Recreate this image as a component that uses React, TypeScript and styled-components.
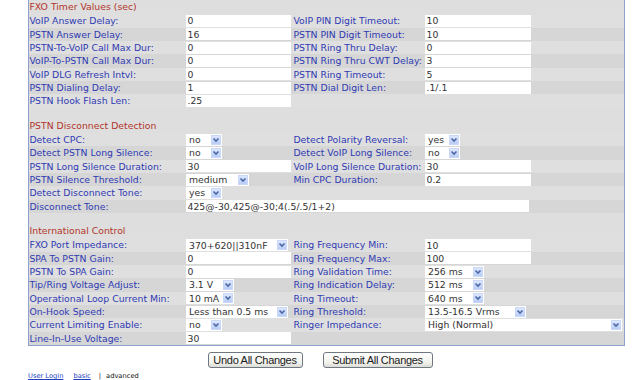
import React from "react";
import styled, { createGlobalStyle } from "styled-components";

const GlobalStyle = createGlobalStyle`
  html, body {
    margin: 0;
    padding: 0;
    background: #ffffff;
  }
  body {
    font-family: "DejaVu Sans", Verdana, sans-serif;
    overflow: hidden;
  }
`;

const Page = styled.div`
  width: 640px;
  height: 380px;
`;

const Panel = styled.div`
  margin-left: 28px;
  width: 595px;
  border-left: 1px solid #8f9fce;
  border-right: 1px solid #8f9fce;
  border-bottom: 1px solid #8f9fce;
`;

const SectionTitle = styled.div`
  height: 14.3px;
  padding-left: 0.5px;
  background: #dedede;
  color: #b3342b;
  font-size: 9.3px;
  line-height: 13.33px;
  white-space: nowrap;
`;

const Spacer = styled.div`
  height: 11.1px;
  background: #dedede;
`;

const Row = styled.div<{ $shade: boolean }>`
  display: grid;
  grid-template-columns: 157px 107px 132px 199px;
  height: 13.33px;
  align-items: center;
  background: ${(p) => (p.$shade ? "#d6d6d6" : "#dfdfdf")};
`;

const Label = styled.span`
  padding-left: 0.4px;
  color: #2f3ab3;
  font-size: 9.3px;
  line-height: 13.33px;
  white-space: nowrap;
  overflow: hidden;
`;

const Field = styled.input<{ $w: number }>`
  display: block;
  width: ${(p) => p.$w}px;
  height: 12px;
  box-sizing: border-box;
  margin: 0;
  padding: 0 0 0 1.5px;
  border: 0;
  outline: none;
  background: #ffffff;
  color: #333333;
  font-family: "DejaVu Sans", Verdana, sans-serif;
  font-size: 9.3px;
`;

const WideCell = styled.div`
  grid-column: 2 / span 3;
`;

const SelectBox = styled.div<{ $w: number }>`
  display: flex;
  align-items: center;
  justify-content: space-between;
  width: ${(p) => p.$w}px;
  height: 12px;
  box-sizing: border-box;
  padding: 0 1px 0 3px;
  background: #ffffff;
  color: #333333;
  font-size: 9.3px;
  white-space: nowrap;
`;

const ArrowBtn = styled.span`
  display: flex;
  align-items: center;
  justify-content: center;
  width: 10px;
  height: 10px;
  box-sizing: border-box;
  border: 1px solid #c9d8f8;
  background: linear-gradient(#dde7fd, #bacdf6);
`;

const ButtonBar = styled.div`
  display: flex;
  justify-content: center;
  gap: 20px;
  margin-top: 6px;
`;

const Button = styled.button<{ $w: number }>`
  width: ${(p) => p.$w}px;
  height: 16px;
  margin: 0;
  padding: 0;
  border: 1px solid #6f7780;
  border-radius: 3px;
  background: linear-gradient(#ffffff, #f1f1ec 70%, #dcdcd6);
  color: #1a1a1a;
  font-family: "Liberation Sans", Arial, sans-serif;
  font-size: 11px;
  letter-spacing: -0.3px;
  line-height: 14px;
`;

const Footer = styled.div`
  display: flex;
  align-items: baseline;
  margin-top: 4px;
  padding-left: 28px;
  font-size: 6.7px;
  line-height: 8px;
  color: #111111;
`;

const FootLink = styled.a<{ $gap?: number }>`
  margin-left: ${(p) => p.$gap ?? 0}px;
  color: #1d3fbf;
  text-decoration: underline;
`;

const FootText = styled.span<{ $gap?: number }>`
  margin-left: ${(p) => p.$gap ?? 0}px;
`;

type Cell =
  | { kind: "input"; value: string }
  | { kind: "select"; value: string; w: number };

type RowSpec = {
  label: string;
  cell: Cell;
  label2?: string;
  cell2?: Cell;
  wide?: boolean;
};

type Section = { title: string; rows: RowSpec[] };

const inp = (value: string): Cell => ({ kind: "input", value });
const sel = (value: string, w: number): Cell => ({ kind: "select", value, w });

const sections: Section[] = [
  {
    title: "FXO Timer Values (sec)",
    rows: [
      { label: "VoIP Answer Delay:", cell: inp("0"), label2: "VoIP PIN Digit Timeout:", cell2: inp("10") },
      { label: "PSTN Answer Delay:", cell: inp("16"), label2: "PSTN PIN Digit Timeout:", cell2: inp("10") },
      { label: "PSTN-To-VoIP Call Max Dur:", cell: inp("0"), label2: "PSTN Ring Thru Delay:", cell2: inp("0") },
      { label: "VoIP-To-PSTN Call Max Dur:", cell: inp("0"), label2: "PSTN Ring Thru CWT Delay:", cell2: inp("3") },
      { label: "VoIP DLG Refresh Intvl:", cell: inp("0"), label2: "PSTN Ring Timeout:", cell2: inp("5") },
      { label: "PSTN Dialing Delay:", cell: inp("1"), label2: "PSTN Dial Digit Len:", cell2: inp(".1/.1") },
      { label: "PSTN Hook Flash Len:", cell: inp(".25") },
    ],
  },
  {
    title: "PSTN Disconnect Detection",
    rows: [
      { label: "Detect CPC:", cell: sel("no", 36), label2: "Detect Polarity Reversal:", cell2: sel("yes", 35) },
      { label: "Detect PSTN Long Silence:", cell: sel("no", 36), label2: "Detect VoIP Long Silence:", cell2: sel("no", 35) },
      { label: "PSTN Long Silence Duration:", cell: inp("30"), label2: "VoIP Long Silence Duration:", cell2: inp("30") },
      { label: "PSTN Silence Threshold:", cell: sel("medium", 63), label2: "Min CPC Duration:", cell2: inp("0.2") },
      { label: "Detect Disconnect Tone:", cell: sel("yes", 36) },
      { label: "Disconnect Tone:", cell: inp("425@-30,425@-30;4(.5/.5/1+2)"), wide: true },
    ],
  },
  {
    title: "International Control",
    rows: [
      { label: "FXO Port Impedance:", cell: sel("370+620||310nF", 102), label2: "Ring Frequency Min:", cell2: inp("10") },
      { label: "SPA To PSTN Gain:", cell: inp("0"), label2: "Ring Frequency Max:", cell2: inp("100") },
      { label: "PSTN To SPA Gain:", cell: inp("0"), label2: "Ring Validation Time:", cell2: sel("256 ms", 59) },
      { label: "Tip/Ring Voltage Adjust:", cell: sel("3.1 V", 48), label2: "Ring Indication Delay:", cell2: sel("512 ms", 59) },
      { label: "Operational Loop Current Min:", cell: sel("10 mA", 48), label2: "Ring Timeout:", cell2: sel("640 ms", 59) },
      { label: "On-Hook Speed:", cell: sel("Less than 0.5 ms", 102), label2: "Ring Threshold:", cell2: sel("13.5-16.5 Vrms", 101) },
      { label: "Current Limiting Enable:", cell: sel("no", 36), label2: "Ringer Impedance:", cell2: sel("High (Normal)", 197) },
      { label: "Line-In-Use Voltage:", cell: inp("30") },
    ],
  },
];

const Chevron = () => (
  <svg width="8" height="8" viewBox="0 0 8 8">
    <path d="M1.5 2.5 L4 5 L6.5 2.5" fill="none" stroke="#4b67a6" strokeWidth="1.6" />
  </svg>
);

const Value = ({ cell, w }: { cell: Cell; w: number }) =>
  cell.kind === "input" ? (
    <Field $w={w} readOnly value={cell.value} />
  ) : (
    <SelectBox $w={cell.w}>
      <span>{cell.value}</span>
      <ArrowBtn>
        <Chevron />
      </ArrowBtn>
    </SelectBox>
  );

const SettingRow = ({ row, shade }: { row: RowSpec; shade: boolean }) => (
  <Row $shade={shade}>
    <Label>{row.label}</Label>
    {row.wide ? (
      <WideCell>
        <Value cell={row.cell} w={343} />
      </WideCell>
    ) : (
      <>
        <div>
          <Value cell={row.cell} w={105} />
        </div>
        <Label>{row.label2 ?? ""}</Label>
        <div>{row.cell2 && <Value cell={row.cell2} w={106} />}</div>
      </>
    )}
  </Row>
);

export default function App() {
  return (
    <Page>
      <GlobalStyle />
      <Panel>
        {sections.map((section, si) => (
          <React.Fragment key={section.title}>
            {si > 0 && <Spacer />}
            <SectionTitle>{section.title}</SectionTitle>
            {section.rows.map((row, ri) => (
              <SettingRow key={row.label} row={row} shade={ri % 2 === 1} />
            ))}
          </React.Fragment>
        ))}
      </Panel>
      <ButtonBar>
        <Button $w={95}>Undo All Changes</Button>
        <Button $w={110}>Submit All Changes</Button>
      </ButtonBar>
      <Footer>
        <FootLink href="#">User Login</FootLink>
        <FootLink href="#" $gap={10}>basic</FootLink>
        <FootText $gap={8}>|</FootText>
        <FootText $gap={5}>advanced</FootText>
      </Footer>
    </Page>
  );
}
